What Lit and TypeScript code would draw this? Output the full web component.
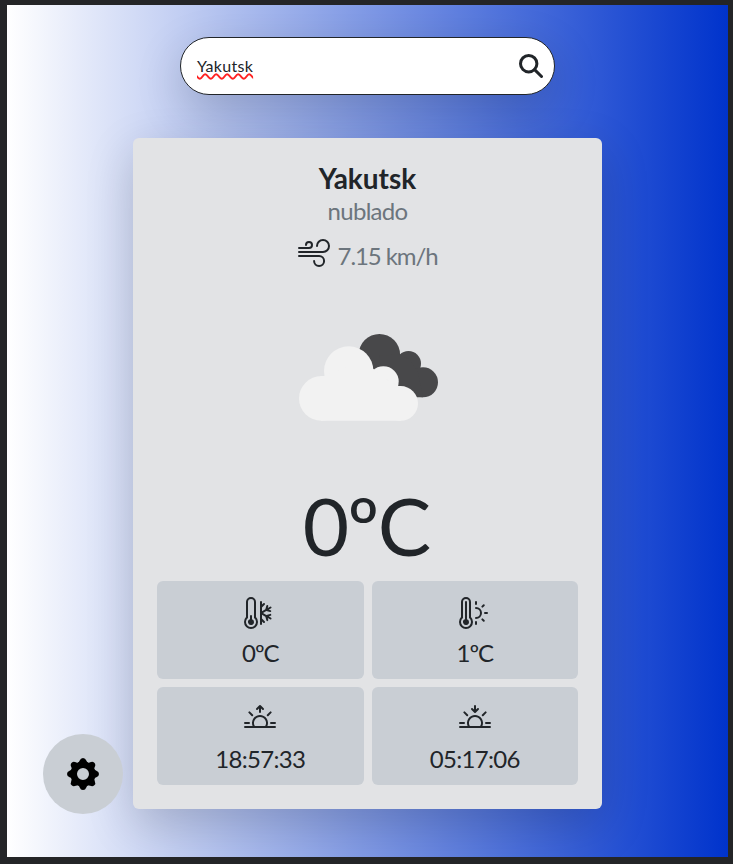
import { LitElement, html, css, svg } from "lit";
import { customElement } from "lit/decorators.js";

const TUBE = "M1 2.5a2.5 2.5 0 0 1 5 0v7.55a3.5 3.5 0 1 1-5 0zM3.5 1A1.5 1.5 0 0 0 2 2.5v7.987l-.167.15a2.5 2.5 0 1 0 3.333 0L5 10.486V2.5A1.5 1.5 0 0 0 3.5 1";
const HORIZON = "M2.343 4.343a.5.5 0 0 1 .707 0l1.414 1.414a.5.5 0 0 1-.707.707L2.343 5.05a.5.5 0 0 1 0-.707m11.314 0a.5.5 0 0 1 0 .707l-1.414 1.414a.5.5 0 1 1-.707-.707l1.414-1.414a.5.5 0 0 1 .707 0M8 7a3 3 0 0 1 2.599 4.5H5.4A3 3 0 0 1 8 7m3.71 4.5a4 4 0 1 0-7.418 0H.499a.5.5 0 0 0 0 1h15a.5.5 0 0 0 0-1h-3.79zM0 10a.5.5 0 0 1 .5-.5h2a.5.5 0 0 1 0 1h-2A.5.5 0 0 1 0 10m13 0a.5.5 0 0 1 .5-.5h2a.5.5 0 0 1 0 1h-2a.5.5 0 0 1-.5-.5";
const ICONS: Record<string, string[]> = {
  wind: ["M12.5 2A2.5 2.5 0 0 0 10 4.5a.5.5 0 0 1-1 0A3.5 3.5 0 1 1 12.5 8H.5a.5.5 0 0 1 0-1h12a2.5 2.5 0 0 0 0-5m-7 1a1 1 0 0 0-1 1 .5.5 0 0 1-1 0 2 2 0 1 1 2 2h-5a.5.5 0 0 1 0-1h5a1 1 0 0 0 0-2M0 9.5A.5.5 0 0 1 .5 9h10.042a3 3 0 1 1-3 3 .5.5 0 0 1 1 0 2 2 0 1 0 2-2H.5a.5.5 0 0 1-.5-.5"],
  cold: [
    "M5 12.5a1.5 1.5 0 1 1-2-1.415V9.5a.5.5 0 0 1 1 0v1.585A1.5 1.5 0 0 1 5 12.5",
    TUBE,
    "M8.5 2a.5.5 0 0 1 .5.5v1.293l.646-.647a.5.5 0 0 1 .708.708L9 5.207v1.927l1.669-.963.495-1.85a.5.5 0 1 1 .966.26l-.237.882 1.12-.646a.5.5 0 0 1 .5.866l-1.12.646.884.237a.5.5 0 1 1-.26.966l-1.848-.495L9.5 8l1.669.963 1.849-.495a.5.5 0 1 1 .258.966l-.883.237 1.12.646a.5.5 0 0 1-.5.866l-1.12-.646.237.883a.5.5 0 1 1-.966.258L10.67 9.83 9 8.866v1.927l1.354 1.353a.5.5 0 0 1-.708.708L9 12.207V13.5a.5.5 0 0 1-1 0v-11a.5.5 0 0 1 .5-.5",
  ],
  warm: [
    "M5 12.5a1.5 1.5 0 1 1-2-1.415V2.5a.5.5 0 0 1 1 0v8.585A1.5 1.5 0 0 1 5 12.5",
    TUBE,
    "M8.5 2a.5.5 0 0 1 .5.5v1a.5.5 0 0 1-1 0v-1a.5.5 0 0 1 .5-.5m4.243 1.757a.5.5 0 0 1 0 .707l-.707.708a.5.5 0 1 1-.708-.708l.708-.707a.5.5 0 0 1 .707 0M8 5.5a.5.5 0 0 1 .5-.5 3 3 0 1 1 0 6 .5.5 0 0 1 0-1 2 2 0 0 0 0-4 .5.5 0 0 1-.5-.5M12.5 8a.5.5 0 0 1 .5-.5h1a.5.5 0 1 1 0 1h-1a.5.5 0 0 1-.5-.5m-1.172 2.828a.5.5 0 0 1 .708 0l.707.708a.5.5 0 0 1-.707.707l-.708-.707a.5.5 0 0 1 0-.708M8.5 12a.5.5 0 0 1 .5.5v1a.5.5 0 0 1-1 0v-1a.5.5 0 0 1 .5-.5",
  ],
  sunrise: ["M7.646 1.146a.5.5 0 0 1 .708 0l1.5 1.5a.5.5 0 0 1-.708.708L8.5 2.707V4.5a.5.5 0 0 1-1 0V2.707l-.646.647a.5.5 0 1 1-.708-.708z", HORIZON],
  sunset: ["M7.646 4.854a.5.5 0 0 0 .708 0l1.5-1.5a.5.5 0 0 0-.708-.708l-.646.647V1.5a.5.5 0 0 0-1 0v1.793l-.646-.647a.5.5 0 1 0-.708.708z", HORIZON],
};

const icon = (name: string) => html`<svg class="icon" viewBox="0 0 16 16" fill="currentColor" fill-rule="evenodd">
  ${ICONS[name].map((d) => svg`<path d=${d}></path>`)}
</svg>`;

const STATS = [
  { icon: "cold", value: "0ºC", kind: "degrees" },
  { icon: "warm", value: "1ºC", kind: "degrees" },
  { icon: "sunrise", value: "18:57:33", kind: "time" },
  { icon: "sunset", value: "05:17:06", kind: "time" },
];

@customElement("app-root")
export class AppRoot extends LitElement {
  static styles = css`
    :host {
      display: block;
      box-sizing: border-box;
      height: 864px;
      padding: 5px 5px 7px 7px;
      background: #242527;
      color: #212529;
      font-family: Lato, sans-serif;
      line-height: 1.5;
    }
    * { box-sizing: border-box; }
    svg { display: block; }
    .page {
      position: relative;
      height: 852px;
      overflow: hidden;
      display: flex;
      flex-direction: column;
      align-items: center;
      padding-top: 32px;
      background: linear-gradient(to right, #fff, #03c);
    }
    .search {
      display: flex;
      align-items: center;
      justify-content: space-between;
      width: 375px;
      height: 58px;
      padding: 0 11px 0 16px;
      border: 1px solid #212529;
      border-radius: 29px;
      background: #fff;
      box-shadow: 0 16px 48px rgba(0, 0, 0, 0.175);
      font-size: 16px;
    }
    .query {
      letter-spacing: 0.3px;
      text-decoration: underline wavy #f22;
      text-decoration-thickness: 1.5px;
      text-decoration-skip-ink: none;
      text-underline-offset: 1px;
    }
    .card {
      display: flex;
      flex-direction: column;
      align-items: center;
      width: 469px;
      height: 671px;
      margin-top: 43px;
      padding: 24px;
      border-radius: 6px;
      background: #e2e3e5;
      box-shadow: 0 16px 48px rgba(0, 0, 0, 0.175);
    }
    .city { font-size: 28px; line-height: 33px; font-weight: 700; }
    .sky {
      font-size: 24px;
      line-height: 32px;
      letter-spacing: -0.7px;
      color: #6c757d;
    }
    .wind { display: flex; gap: 8px; margin-top: 10px; }
    .speed {
      font-size: 24px;
      line-height: 38px;
      height: 40px;
      letter-spacing: -1.1px;
      color: #6c757d;
    }
    .icon { width: 32px; height: 32px; }
    .cloud { margin-top: 1px; }
    .temp {
      font-size: 80px;
      line-height: 96px;
      margin: -1px 3px 0 0;
      letter-spacing: -1.8px;
    }
    .stats {
      display: grid;
      grid-template-columns: 1fr 1fr;
      gap: 8px;
      width: 100%;
      margin-top: auto;
    }
    .stat {
      display: flex;
      flex-direction: column;
      align-items: center;
      height: 98px;
      padding-top: 16px;
      border-radius: 6px;
      background: #c9ced4;
      font-size: 24px;
      line-height: 36px;
    }
    .stat .icon { margin-bottom: 6px; }
    .time { letter-spacing: -0.7px; }
    .degrees { letter-spacing: -1.1px; }
    .settings {
      position: absolute;
      left: 36px;
      bottom: 43px;
      display: grid;
      place-items: center;
      width: 80px;
      height: 80px;
      border-radius: 50%;
      background: #c9ced4;
      color: #000;
    }
  `;

  render() {
    return html`<main class="page">
      <div class="search">
        <span class="query">Yakutsk</span>
        <svg width="24" height="24" viewBox="0 0 24 24" fill="none" stroke="currentColor" stroke-width="3">
          <circle cx="9.7" cy="9.7" r="8.2"></circle>
          <path d="M15.6 15.6 22.5 22.5" stroke-linecap="round"></path>
        </svg>
      </div>
      <section class="card">
        <div class="city">Yakutsk</div>
        <div class="sky">nublado</div>
        <div class="wind">${icon("wind")}<span class="speed">7.15 km/h</span></div>
        <svg class="cloud" width="200" height="200" viewBox="268 278 200 200">
          <g fill="#48484a">
            <circle cx="379.4" cy="354.7" r="20.7"></circle>
            <circle cx="408.5" cy="363.5" r="12.5"></circle>
            <circle cx="423" cy="382.3" r="15"></circle>
            <path d="M379 356L400 354.3 410 360 418 372 423 397.3H385Z"></path>
          </g>
          <g fill="#f2f2f2">
            <circle cx="321.3" cy="398.4" r="22.3"></circle>
            <circle cx="348.7" cy="371" r="24.7"></circle>
            <circle cx="383.4" cy="381.5" r="15.3"></circle>
            <circle cx="400.7" cy="403.4" r="17.3"></circle>
            <path d="M321 376.1H324.5L349 366H370L384 378 398 386.1H401V420.7H321Z"></path>
          </g>
        </svg>
        <div class="temp">0ºC</div>
        <div class="stats">
          ${STATS.map((s) => html`<div class="stat">${icon(s.icon)}<span class=${s.kind}>${s.value}</span></div>`)}
        </div>
      </section>
      <div class="settings">
        <svg width="32" height="32" viewBox="-16 -16 32 32">
          <circle r="9.2" fill="none" stroke="currentColor" stroke-width="6.4"></circle>
          ${[0, 45, 90, 135, 180, 225, 270, 315].map(
            (a) => svg`<path transform="rotate(${a})" fill="currentColor" d="M-5.5-10.6Q-3.9-11.6-3.3-13.4Q-2.4-16 0-16Q2.4-16 3.3-13.4Q3.9-11.6 5.5-10.6Z"></path>`
          )}
        </svg>
      </div>
    </main>`;
  }
}
